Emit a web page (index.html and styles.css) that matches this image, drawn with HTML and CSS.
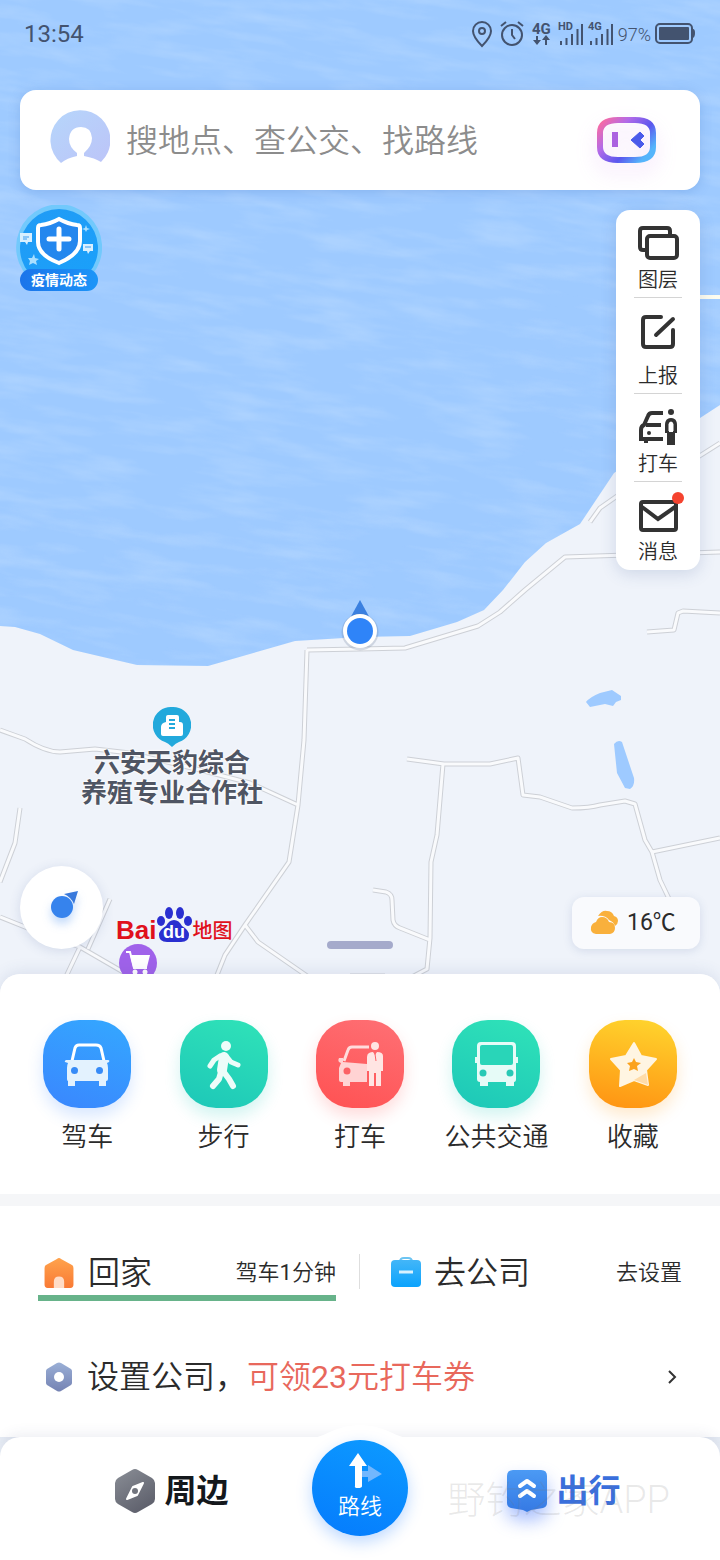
FILE: index.html
```
<!DOCTYPE html>
<html lang="zh-CN">
<head>
<meta charset="utf-8">
<meta name="viewport" content="width=device-width, initial-scale=1">
<title>地图</title>
<link rel="stylesheet" href="styles.css">
</head>
<body>
<div class="app">
  <main class="map">
    <svg class="map-canvas" viewBox="0 0 720 998" preserveAspectRatio="xMidYMin slice" aria-hidden="true">
      <defs>
        <filter id="ripple" x="0" y="0" width="100%" height="100%">
          <feTurbulence type="fractalNoise" baseFrequency="0.016 0.08" numOctaves="4" seed="8"/>
          <feColorMatrix values="0 0 0 0 0.78  0 0 0 0 0.89  0 0 0 0 1  2.2 0 0 0 -0.9"/>
        </filter>
        <clipPath id="lake"><path d="M0 0H720V405L700 418 614 473 580 524 546 543 525 562 503 590 484 610 457 622 410 636 360 637 295 641 208 666 137 665 73 650 40 634 15 627 0 626Z"/></clipPath>
        <path id="roads" d="M307 650 360 649 405 648 478 626 500 612 525 590 565 557 720 552M590 522 600 508 620 494 690 462 720 443M307 650 304 740 298 805 289 862 245 925 225 955 213 985M245 925 258 942 310 978M0 730 25 739Q45 752 60 752L95 749 130 753 200 770 250 783 298 805M20 808 15 843 0 882M0 917 40 933 80 947 130 976M110 899 88 949M80 947 62 985M407 759 444 764 490 764 518 758 523 795 540 797 572 808Q590 808 600 805L625 801 635 804 645 840 652 852 720 838M652 852 660 880 672 905M443 764 437 835 431 862 430 938 427 969 410 978M373 890 386 892Q392 894 392 900L393 920Q394 926 400 928L430 940M647 632 674 630 678 613 683 611 720 613M350 976H385"/>
      </defs>
      <rect class="land" width="720" height="998"/>
      <g clip-path="url(#lake)">
        <rect class="water" width="720" height="670"/>
        <rect width="720" height="900" y="-130" filter="url(#ripple)" transform="rotate(8 360 335) scale(1.2) translate(-60 0)" opacity=".2"/>
      </g>
      <path class="water" d="M586 702Q590 697 600 693L612 690 621 696 621 700 616 702 613 706 605 704 590 707ZM614 744Q618 739 622 742L634 778Q635 786 630 789L625 788 617 773Z"/>
      <use href="#roads" class="road-edge"/>
      <use href="#roads" class="road-fill"/>
      <path d="M696 297H720" stroke="#fdfcef" stroke-width="4"/>
    </svg>

    <div class="pin pin-me" aria-label="我的位置">
      <svg width="44" height="56" viewBox="0 0 44 56"><path d="M22 3 34 25H10Z" fill="#3b80e0"/><circle cx="22" cy="35" r="18.500" fill="#6b7a99" opacity=".25"/><circle cx="22" cy="34" r="17" fill="#fff"/><circle cx="22" cy="34" r="13" fill="#2f84f8"/></svg>
    </div>
    <div class="pin pin-poi">
      <svg width="38" height="42" viewBox="0 0 38 42"><path d="M19 1a18 18 0 0 1 7 35q-3 1-7 5-4-4-7-5A18 18 0 0 1 19 1Z" fill="#22a9dc"/><path d="M13 11q0-2 2-2h9q2 0 2 2v5h1q3 0 3 3v9q0 2-2 2H10q-2 0-2-2v-7q0-4 5-5Z" fill="#fff"/><path d="M16 14h6M16 18h6M16 22h6" stroke="#22a9dc" stroke-width="2"/></svg>
      <span>六安天豹综合<br>养殖专业合作社</span>
    </div>
    <div class="pin pin-shop">
      <svg width="38" height="38" viewBox="0 0 38 38"><circle cx="19" cy="19" r="19" fill="#a062ea"/><path d="M7 8h4l4 16h13M7 8" fill="none" stroke="#fff" stroke-width="2"/><path d="M11 11h20l-3 12H14Z" fill="#fff"/><circle cx="16" cy="28" r="2.500" fill="#fff"/><circle cx="26" cy="28" r="2.500" fill="#fff"/></svg>
    </div>

    <header class="status">
      <time>13:54</time>
      <div class="status-icons">
        <svg width="144" height="30" viewBox="0 0 144 30" fill="none" stroke="#43536f" stroke-width="2">
          <path d="M11 27Q2 18 2 12a9 9 0 0 1 18 0q0 6-9 15Z"/><circle cx="11" cy="12" r="3"/>
          <circle cx="41" cy="16" r="10"/><path d="M41 10v6l3 4M30 7l5-4M52 7l-5-4"/>
          <path d="M66 17v6M75 26v-7"/><path d="M62 21h8l-4 5ZM71 21h8l-4-5Z" fill="#43536f" stroke="none"/>
          <path d="M90 26v-4M95.500 26v-7M101 26V15M106.500 26V10M111 26V5M120 26v-4M125.500 26v-7M131 26V15M136.500 26V10M141 26V5"/>
          <g fill="#43536f" stroke="none" class="tiny"><text x="61" y="15" class="tiny-lg">4G</text><text x="87" y="11">HD</text><text x="117" y="11">4G</text></g>
        </svg>
        <span>97%</span>
        <svg width="42" height="22" viewBox="0 0 42 22"><rect x="2" y="1" width="36" height="19" rx="4" fill="none" stroke="#43536f" stroke-width="2"/><rect x="5" y="4" width="30" height="13" rx="1" fill="#43536f"/><path d="M39 6q2 0 2 4t-2 5Z" fill="#43536f"/></svg>
      </div>
    </header>

    <form class="search">
      <button type="button" class="avatar" aria-label="个人中心">
        <svg width="60" height="60" viewBox="0 0 60 60"><defs><linearGradient id="av" x2="1" y2="1"><stop stop-color="#b6d6fb"/><stop offset="1" stop-color="#bcc4f8"/></linearGradient></defs><path d="M11 53A30 30 0 1 1 51 52Q45 48 34 46V43Q42 36 42 28 41 17 31 17 20 17 19 29 19 37 27 43V46Q17 48 11 53Z" fill="url(#av)"/></svg>
      </button>
      <input type="search" aria-label="搜索" placeholder="搜地点、查公交、找路线">
      <button type="button" class="assistant" aria-label="语音助手">
        <svg width="62" height="48" viewBox="0 0 62 48"><defs><linearGradient id="bot" x2="1" y2=".7"><stop stop-color="#ff6a9c"/><stop offset=".35" stop-color="#b36ae8"/><stop offset=".7" stop-color="#5b57ee"/><stop offset="1" stop-color="#55b5fb"/></linearGradient></defs><path d="M22 4h17Q57 4 57 17v14Q57 44 39 44H22Q4 44 4 31V17Q4 4 22 4Z" fill="none" stroke="url(#bot)" stroke-width="6"/><path d="M16 16h6v15h-6Z" fill="#ab62e0"/><path d="m44 16 4 4-4 4 4 4-4 4-9-8Z" fill="#4a5bea" stroke="#4a5bea" stroke-linejoin="round"/></svg>
      </button>
    </form>

    <div class="map-side">
      <button type="button" class="badge">
        <svg width="86" height="86" viewBox="0 0 86 86"><defs><linearGradient id="bg1" x2="1" y2="1"><stop stop-color="#219bf5"/><stop offset="1" stop-color="#1aa0fa"/></linearGradient></defs><path d="M12 72A43 43 0 1 1 76 70Z" fill="#72c9fc"/><path d="M13 68A39 39 0 1 1 73 68Z" fill="url(#bg1)"/><path d="M43 14q9 5 18 6 3 0 3 3v13q0 13-21 22Q22 50 22 37V23q0-3 3-3 9-1 18-6Z" fill="#2487ee" stroke="#fff" stroke-width="4"/><path d="M43 24v20M33 34h20" stroke="#fff" stroke-width="5" stroke-linecap="round"/><path d="M4 28h12v9h-4l-1 3-2-3H4ZM67 39h10v7h-3l-2 3-1-3h-4Z" fill="#d9f0ff"/><path d="M7 32h6M7 34h4M69 42h6" stroke="#3d9df0"/><path d="m18 49 1 4 4 1-3 2 1 4-4-2-4 2 1-4-2-3h4ZM70 20l1 3 3 1-3 1-1 2-1-2-3-1 3-1Z" fill="#a9dfff"/></svg>
        <span>疫情动态</span>
      </button>
      <ul class="tools">
        <li><button type="button"><svg width="42" height="40" viewBox="0 0 42 40" class="line"><path d="M8 26H6q-3 0-3-3V7q0-3 3-3h24q3 0 3 3v3"/><rect x="10" y="12" width="30" height="22" rx="3"/></svg>图层</button></li>
        <li class="roomy"><button type="button"><svg width="42" height="40" viewBox="0 0 42 40" class="line"><path d="M24 5H9Q6 5 6 8v24q0 3 3 3h24q3 0 3-3V18M36 7 19 23" stroke-linecap="round"/></svg>上报</button></li>
        <li><button type="button"><svg width="42" height="40" viewBox="0 0 42 40" class="line"><path d="M26 5H15q-3 0-4 3L7 17q-3 1-3 5v9h22M9 17h15M9 31v4"/><circle cx="12" cy="25" r="2" fill="#333" stroke="none"/><circle cx="34" cy="4" r="3" fill="#333" stroke="none"/><path d="M29 24v-7q0-6 5-6t5 6v7h-2v12h-2V25h-2v11h-2V24Z" stroke-width="2"/><path d="M30 24v-8q1-4 4-4t4 4v8" stroke-width="3"/></svg>打车</button></li>
        <li><button type="button"><svg width="42" height="40" viewBox="0 0 42 40" class="line"><rect x="4" y="6" width="35" height="28" rx="2"/><path d="m5 11 16 12L38 11"/></svg>消息<i class="dot"></i></button></li>
      </ul>
    </div>

    <div class="map-foot">
      <div class="foot-left">
        <button type="button" class="compass" aria-label="定位"><svg width="34" height="34" viewBox="0 0 34 34"><circle cx="16" cy="19" r="11" fill="#3683ed"/><path d="M18 6 32 3 28 16Q25 9 18 6Z" fill="#3979dc"/></svg></button>
        <div class="logo"><span class="logo-bai">Bai</span><svg width="36" height="38" viewBox="0 0 36 38"><g fill="#2a2fd0"><ellipse cx="5" cy="15" rx="4" ry="5"/><ellipse cx="13" cy="7" rx="4" ry="6"/><ellipse cx="24" cy="7" rx="4" ry="6"/><ellipse cx="32" cy="15" rx="4" ry="5"/><path d="M18 14q5 0 8 6 7 4 7 9 0 7-8 7H11q-8 0-8-7 0-5 7-9 3-6 8-6Z"/></g><text x="18" y="32" class="logo-du">du</text></svg><span class="logo-map">地图</span></div>
      </div>
      <div class="handle"></div>
      <button type="button" class="weather"><svg width="28" height="26" viewBox="0 0 28 26" fill="#f9b03c"><path d="M8 6Q12 0 17 1q5 0 7 5 4 1 4 5 0 3-3 5-1-4-6-6-4-5-11-4Z"/><path d="M6 24Q0 23 1 17q1-4 5-5 2-5 6-5 5 0 7 5 6 0 6 6 0 5-5 6Z"/></svg>16℃</button>
    </div>
  </main>

  <section class="sheet">
    <nav class="quick" aria-label="出行方式">
      <a href="#drive"><span class="tile blue"><svg viewBox="0 0 88 88"><path d="M29 41 32 28q1-3 4-3h17q4 0 5 3l3 13" fill="none" stroke="#fff" stroke-width="3"/><path d="M23 40h42q2 0 1 2l-2 1q1 2 1 5v11q0 2-2 2v5h-7v-5H32v5h-7v-5q-1 0-1-2V48q0-3 1-5l-3-1q-1-1 1-2Z" fill="#e3f2fe"/><circle cx="31.500" cy="50.500" r="3.500" fill="#378bf7"/><circle cx="56.500" cy="50.500" r="3.500" fill="#378bf7"/></svg></span>驾车</a>
      <a href="#walk"><span class="tile green"><svg viewBox="0 0 88 88" fill="none" stroke="#edfcf9" stroke-linecap="round" stroke-linejoin="round"><circle cx="46" cy="26" r="5" fill="#edfcf9" stroke="none"/><path d="M44 37 42 50" stroke-width="10"/><path d="m40 36-6 4-4 6M47 37l4 5 7 3" stroke-width="5"/><path d="m41 52-2 7-6 7M43 51l6 8 4 7" stroke-width="6"/></svg></span>步行</a>
      <a href="#taxi"><span class="tile red"><svg viewBox="0 0 88 88"><path d="M53 27H36q-3 0-4 3l-4 11" fill="none" stroke="#ffdcdc" stroke-width="3"/><path d="M23 38h4v4l24 2v18H34v4h-7v-4h-2q-2 0-2-2V48l2-5q-4-1-2-5Z" fill="#ffd3d3"/><circle cx="31" cy="51" r="3.500" fill="#fc6064"/><path d="M53 33q2-1 4-1l2 3 2-3q6 0 6 4v15h-2v15h-5V53h-2v13h-5V51h-2V37q0-3 2-4Z" fill="#ffe5e3"/><circle cx="59" cy="26" r="4" fill="#ffe5e3"/><path d="m59 34 1 7" stroke="#fc6064"/></svg></span>打车</a>
      <a href="#transit"><span class="tile green"><svg viewBox="0 0 88 88"><path d="M29 22h31q4 0 4 4v11h2v6h-2v16q0 3-2 3v4h-8v-4H36v4h-8v-4q-3 0-3-3V43h-2v-6h2V26q0-4 4-4Z" fill="#e6fbf7"/><rect x="28" y="25" width="33" height="20" rx="2" fill="#29d5b8"/><circle cx="31" cy="53" r="3.500" fill="#28c9b5"/><circle cx="58" cy="53" r="3.500" fill="#28c9b5"/></svg></span>公共交通</a>
      <a href="#saved"><span class="tile amber"><svg viewBox="0 0 88 88"><path d="m45 23 7 13 15 3-10 11 2 15-14-5-14 6 1-16-10-11 15-3Z" fill="#fff5e2" stroke="#fff5e2" stroke-width="2" stroke-linejoin="round"/><path d="M45 60 57 53l2 12Z" fill="#ffdca8"/><path d="m45 38 2 4 5 1-4 3 1 5-4-2-5 2 1-5-3-3 5-1Z" fill="#fba21c"/></svg></span>收藏</a>
    </nav>

    <div class="trips">
      <div class="places">
        <a class="place home" href="#home"><svg width="30" height="32" viewBox="1 0 28 31"><defs><linearGradient id="hm" x2="0" y2="1"><stop stop-color="#ffa34c"/><stop offset="1" stop-color="#f97a35"/></linearGradient></defs><path d="m13 2q2-2 4 0l11 6q1 1 1 3v16q0 3-3 3H4q-3 0-3-3V11q0-2 1-3Z" fill="url(#hm)"/><path d="M10 30v-6q0-5 5-5t5 5v6Z" fill="#ffdcc6"/></svg><strong>回家</strong><span>驾车<b class="num">1</b>分钟</span></a>
        <a class="place work" href="#work"><svg width="32" height="32" viewBox="0 0 32 32"><defs><linearGradient id="wk" x2="0" y2="1"><stop stop-color="#43b6f8"/><stop offset="1" stop-color="#0ba3fd"/></linearGradient></defs><path d="M10 5q0-4 4-4h4q4 0 4 4" fill="none" stroke="#6cc4f2" stroke-width="2"/><rect x="1" y="3" width="30" height="27" rx="4" fill="url(#wk)"/><path d="M9 15h14" stroke="#d8f2ff" stroke-width="3"/></svg><strong>去公司</strong><span>去设置</span></a>
      </div>
      <a class="promo" href="#promo"><svg width="30" height="32" viewBox="0 0 30 32"><defs><linearGradient id="hx" x2="0" y2="1"><stop stop-color="#9aafd6"/><stop offset="1" stop-color="#7583b3"/></linearGradient></defs><path d="M13 2q2-1 4 0l10 6q1 1 1 2v12q0 1-1 2l-10 6q-2 1-4 0L3 24q-1-1-1-2V10q0-1 1-2Z" fill="url(#hx)"/><circle cx="15" cy="16" r="5" fill="#fff"/></svg><span>设置公司，<em>可领<b class="num">23</b>元打车券</em></span><svg class="chev" width="12" height="18" viewBox="0 0 12 18"><path d="m3 3 6 6-6 6" fill="none" stroke="#333" stroke-width="2"/></svg></a>
    </div>
  </section>

  <nav class="tabs" aria-label="主导航">
    <svg class="bump" width="120" height="16" viewBox="0 0 120 16"><path d="M0 16Q16 14 32 6 46 0 60 0T88 6Q104 14 120 16Z" fill="#fff"/></svg>
    <a class="tab near" href="#near"><svg width="40" height="44" viewBox="0 0 40 44"><defs><linearGradient id="nr" x2=".6" y2="1"><stop stop-color="#8a8e96"/><stop offset="1" stop-color="#5f616d"/></linearGradient></defs><path d="M17 1q3-2 6 0l14 8q3 2 3 5v16q0 3-3 5l-14 8q-3 2-6 0L3 35q-3-2-3-5V14q0-3 3-5Z" fill="url(#nr)"/><path d="m28 14-10 4-6 12 10-4Z" fill="#fff" stroke="#fff" stroke-width="2" stroke-linejoin="round"/><circle cx="20" cy="22" r="3" fill="#72757e"/></svg>周边</a>
    <a class="route" href="#route"><svg width="48" height="38" viewBox="0 0 48 38"><path d="M25 19h7v-6l14 9-14 8v-5h-7Z" fill="#8dc0fd" opacity=".8"/><path d="M22 1 31 14H26V34q0 2-4 2t-3-2V14h-6Z" fill="#fff"/></svg>路线</a>
    <a class="tab go" href="#go"><svg width="40" height="44" viewBox="0 0 40 44"><defs><linearGradient id="gg" x2="0" y2="1"><stop stop-color="#4b9af4"/><stop offset="1" stop-color="#3579e4"/></linearGradient></defs><path d="M6 1h28q6 0 6 6v27q0 4-4 5l-12 2-4 2-4-2-12-2q-4-1-4-5V7q0-6 6-6Z" fill="url(#gg)"/><path d="m13 17 7-5 7 5M13 27l7-5 7 5" fill="none" stroke="#fff" stroke-width="4" stroke-linecap="round" stroke-linejoin="round"/></svg>出行</a>
    <span class="watermark">野钓之家APP</span>
  </nav>
</div>
</body>
</html>
```
FILE: styles.css
```
* { box-sizing: border-box; }
body {
  margin: 0;
  font-family: Roboto, "Noto Sans CJK SC", sans-serif;
  font-weight: 350;
  color: #2b2b2b;
}
a { color: inherit; text-decoration: none; }
button {
  padding: 0;
  border: 0;
  background: none;
  font: inherit;
  color: inherit;
}
svg { display: block; flex: none; }
.num { font-weight: 400; }

.app {
  display: flex;
  flex-direction: column;
  min-height: 100vh;
  background: #eaeff6;
}

/* Map */
.map {
  position: relative;
  z-index: 0;
  flex: 1 0 auto;
  display: flex;
  flex-direction: column;
  margin-bottom: -24px;
  padding-bottom: 49px;
  overflow: hidden;
}
.map-canvas {
  position: absolute;
  inset: 0;
  z-index: -2;
  width: 100%;
  height: 100%;
}
.land { fill: #eff3fa; }
.water { fill: #9ecaff; }
.road-edge, .road-fill { fill: none; stroke-linejoin: round; }
.road-edge { stroke: #cdd0d6; stroke-width: 5px; }
.road-fill { stroke: #f9fafc; stroke-width: 3px; }

.pin {
  position: absolute;
  z-index: -1;
  display: flex;
  flex-direction: column;
  align-items: center;
  transform: translateX(-50%);
}
.pin-me { left: 50%; top: 597px; }
.pin-poi {
  left: 172px;
  top: 706px;
  font-size: 26px;
  line-height: 30px;
  font-weight: 700;
  color: #4f5563;
  text-align: center;
  white-space: nowrap;
  text-shadow: 0 0 2px #fff, 0 0 2px #fff, 0 0 3px #fff;
}
.pin-shop { left: 138px; top: 944px; }

.status {
  display: flex;
  align-items: center;
  justify-content: space-between;
  height: 68px;
  padding: 0 24px;
  font-size: 24px;
  font-weight: 400;
  color: #43536f;
}
.status-icons {
  display: flex;
  align-items: center;
  gap: 3px;
  font-size: 18px;
  font-weight: 300;
}
.tiny { font: 700 11px Roboto, sans-serif; }
.tiny-lg { font-size: 15px; }

.search {
  display: flex;
  align-items: center;
  gap: 16px;
  height: 100px;
  margin: 22px 20px 0;
  padding: 0 42px 0 30px;
  background: #fff;
  border-radius: 16px;
  box-shadow: 0 2px 12px rgba(60, 110, 190, .25);
}
.search input {
  flex: 1;
  min-width: 0;
  padding: 2px 0 0;
  border: 0;
  outline: 0;
  background: none;
  font: inherit;
  font-size: 32px;
  line-height: 48px;
}
.search input::placeholder { color: #8c8c8c; opacity: 1; }
.assistant { filter: drop-shadow(0 10px 10px rgba(200, 110, 230, .22)); }

.map-side {
  display: flex;
  align-items: flex-start;
  justify-content: space-between;
  padding: 15px 20px 0 16px;
}
.badge { position: relative; }
.badge span {
  position: absolute;
  left: 4px;
  right: 4px;
  bottom: 0;
  border-radius: 11px;
  background: linear-gradient(90deg, #1b74ea, #1c95f8);
  color: #fff;
  font-size: 14px;
  font-weight: 700;
  line-height: 22px;
}
.tools {
  width: 84px;
  margin: 5px 0 0;
  padding: 0 18px;
  list-style: none;
  background: #fff;
  border-radius: 14px;
  box-shadow: 0 4px 16px rgba(60, 90, 150, .18);
}
.tools li { border-bottom: 1px solid #d4d4d4; }
.tools li:last-child { border-color: transparent; }
.tools button {
  position: relative;
  display: flex;
  flex-direction: column;
  align-items: center;
  gap: 4px;
  width: 100%;
  padding: 14px 0 5px;
  font-size: 20px;
  line-height: 24px;
}
.tools .roomy button { gap: 12px; }
.line { fill: none; stroke: #333; stroke-width: 4px; }
.dot {
  position: absolute;
  right: -2px;
  top: 10px;
  width: 12px;
  height: 12px;
  border-radius: 50%;
  background: #f5432f;
}

.map-foot {
  display: grid;
  grid-template-columns: 1fr 66px 1fr;
  align-items: end;
  margin-top: auto;
  padding: 0 20px;
}
.foot-left { display: flex; align-items: flex-end; gap: 13px; }
.compass {
  display: grid;
  place-items: center;
  width: 83px;
  height: 83px;
  padding: 0 0 6px 3px;
  border-radius: 50%;
  background: #fff;
  box-shadow: 0 2px 12px rgba(60, 90, 150, .16);
}
.compass svg { filter: drop-shadow(0 6px 5px rgba(54, 131, 237, .3)); }
.logo {
  display: flex;
  align-items: flex-end;
  padding-bottom: 5px;
  color: #e0101c;
  font-weight: 700;
}
.logo-bai { font-family: "Liberation Sans", sans-serif; font-size: 26px; line-height: 28px; }
.logo-du {
  fill: #fff;
  font: 700 18px "Liberation Sans", sans-serif;
  text-anchor: middle;
}
.logo-map { font-size: 20px; line-height: 26px; font-weight: 500; }
.handle { height: 8px; border-radius: 4px; background: #a5aacb; }
.weather {
  justify-self: end;
  display: flex;
  align-items: center;
  gap: 9px;
  width: 128px;
  height: 52px;
  padding: 0 18px;
  border-radius: 12px;
  background: #f9fafd;
  box-shadow: 0 2px 10px rgba(60, 90, 150, .15);
  font-size: 23px;
  font-weight: 400;
  line-height: 28px;
}

/* Sheet */
.sheet {
  position: relative;
  display: flex;
  flex-direction: column;
  gap: 12px;
  border-radius: 20px 20px 0 0;
  background: #f5f6f8;
  box-shadow: 0 -2px 16px rgba(60, 80, 140, .12);
}
.quick {
  display: grid;
  grid-template-columns: repeat(5, 1fr);
  padding: 46px 19px 41px;
  border-radius: 20px 20px 0 0;
  background: #fff;
  font-size: 26px;
  line-height: 32px;
}
.quick a {
  display: flex;
  flex-direction: column;
  align-items: center;
  gap: 13px;
}
.tile {
  width: 88px;
  height: 88px;
  border-radius: 36px;
}
.blue { background: linear-gradient(200deg, #34a8ff, #3a86fe); box-shadow: 0 8px 16px rgba(58, 134, 254, .2); }
.green { background: linear-gradient(200deg, #30e3b8, #1dc7b8); box-shadow: 0 8px 16px rgba(29, 199, 184, .2); }
.red { background: linear-gradient(200deg, #fe7075, #ff5152); box-shadow: 0 8px 16px rgba(255, 81, 82, .2); }
.amber { background: linear-gradient(190deg, #ffd62e, #ff9212); box-shadow: 0 8px 16px rgba(255, 160, 30, .22); }

.trips { padding: 44px 38px 35px; background: #fff; }
.places { display: grid; grid-template-columns: 322px 1fr; }
.place {
  display: flex;
  align-items: center;
  gap: 14px;
  height: 51px;
  padding-left: 6px;
  font-size: 22px;
  line-height: 40px;
}
.place strong, .promo { font-size: 32px; font-weight: 350; }
.place span { margin-left: auto; }
.home { margin-right: 24px; border-bottom: 6px solid #67b38a; }
.work {
  position: relative;
  height: 45px;
  padding-left: 30px;
  gap: 12px;
}
.work::before {
  content: "";
  position: absolute;
  left: -1px;
  top: 4px;
  bottom: 6px;
  width: 1px;
  background: #dedede;
}
.promo {
  display: flex;
  align-items: center;
  gap: 13px;
  margin-top: 51px;
  padding-left: 6px;
  line-height: 50px;
}
.promo em { font-style: normal; color: #e8685c; }
.chev { margin: 0 4px 0 auto; }

/* Tab bar */
.tabs {
  position: relative;
  display: grid;
  grid-template-columns: 1fr 96px 1fr;
  align-items: center;
  padding: 3px 0 24px;
  border-radius: 20px 20px 0 0;
  background: #fff;
  box-shadow: 0 -2px 14px rgba(60, 70, 120, .1);
}
.bump {
  position: absolute;
  left: 50%;
  bottom: 100%;
  margin: 0 0 -4px -60px;
}
.tab {
  display: flex;
  align-items: center;
  justify-content: center;
  gap: 9px;
  padding-top: 6px;
  font-size: 32px;
  line-height: 44px;
  font-weight: 700;
}
.near { padding-left: 32px; color: #14181c; }
.go { color: #3a6fdc; }
.go svg { filter: drop-shadow(0 10px 9px rgba(60, 110, 250, .45)); }
.route {
  position: relative;
  display: flex;
  flex-direction: column;
  align-items: center;
  gap: 2px;
  height: 96px;
  padding-top: 12px;
  border-radius: 50%;
  background: linear-gradient(200deg, #0d9bff, #057bfd);
  box-shadow: 0 6px 16px rgba(20, 120, 255, .28);
  color: #fff;
  font-size: 22px;
  line-height: 30px;
}
.watermark {
  position: absolute;
  right: 50px;
  top: 38px;
  font-size: 38px;
  line-height: 50px;
  font-weight: 300;
  color: rgba(120, 120, 120, .16);
  pointer-events: none;
}
```
